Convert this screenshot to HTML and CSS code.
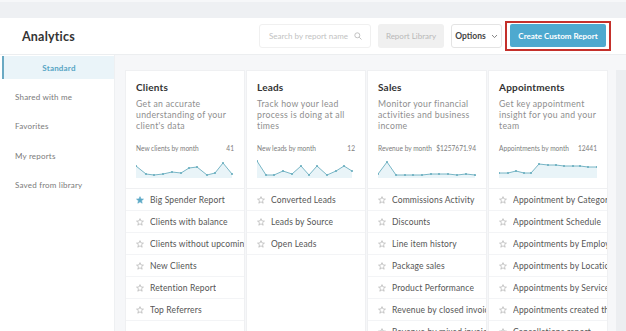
FILE: index.html
```html
<!DOCTYPE html>
<html lang="en">
<head>
  <meta charset="UTF-8">
  <title>Analytics</title>
  <link rel="stylesheet" href="styles.css">
</head>
<body>
  <div class="topstrip"></div>

  <!-- Header -->
  <div class="header">
    <h1>Analytics</h1>
    <div class="actions">
      <div class="search">
        <span>Search by report name</span>
        <svg width="8" height="8" viewBox="0 0 8 8"><circle cx="3.3" cy="3.3" r="2.5" fill="none" stroke="#bbb" stroke-width="0.9"/><line x1="5.2" y1="5.2" x2="7.5" y2="7.5" stroke="#bbb" stroke-width="0.9"/></svg>
      </div>
      <div class="btn-library">Report Library</div>
      <div class="btn-options">Options
        <svg width="7" height="5" viewBox="0 0 7 5"><polyline points="1,1 3.5,3.6 6,1" fill="none" stroke="#777" stroke-width="0.9"/></svg>
      </div>
      <div class="highlight"><div class="btn-create">Create Custom Report</div></div>
    </div>
  </div>

  <div class="body">
    <!-- Sidebar -->
    <div class="sidebar">
      <div class="side-item active">Standard</div>
      <div class="side-item">Shared with me</div>
      <div class="side-item">Favorites</div>
      <div class="side-item">My reports</div>
      <div class="side-item">Saved from library</div>
    </div>

    <!-- Report columns -->
    <div class="main">
      <div class="columns" id="columns"></div>
      <div class="track"></div>
    </div>
  </div>

  <script>
    const columns = [
      {
        title: 'Clients',
        desc: "Get an accurate understanding of your client's data",
        stat: 'New clients by month', value: '41',
        pts: [[0,8],[10,16],[18,17],[27,16],[36,14],[45,15],[53,10],[61,9],[71,17],[79,15],[87,5],[96,16]],
        items: ['Big Spender Report', 'Clients with balance', 'Clients without upcoming appointments', 'New Clients', 'Retention Report', 'Top Referrers'],
        fav: 0
      },
      {
        title: 'Leads',
        desc: 'Track how your lead process is doing at all times',
        stat: 'New leads by month', value: '12',
        pts: [[0,3],[9,17],[17,17],[26,13],[35,16],[44,8],[52,17],[60,8],[70,17],[79,13],[87,8],[95,13]],
        items: ['Converted Leads', 'Leads by Source', 'Open Leads']
      },
      {
        title: 'Sales',
        desc: 'Monitor your financial activities and business income',
        stat: 'Revenue by month', value: '$1257671.94',
        pts: [[0,16],[9,4],[18,17],[27,17],[35,17],[44,17],[53,16],[61,16],[70,16],[79,17],[88,16],[97,17]],
        items: ['Commissions Activity', 'Discounts', 'Line item history', 'Package sales', 'Product Performance', 'Revenue by closed invoices', 'Revenue by mixed invoices']
      },
      {
        title: 'Appointments',
        desc: 'Get key appointment insight for you and your team',
        stat: 'Appointments by month', value: '12441',
        pts: [[0,15],[9,15],[17,13],[25,15],[32,15],[40,6],[49,7],[57,7],[65,8],[74,8],[81,8],[89,9],[98,9]],
        items: ['Appointment by Category', 'Appointment Schedule', 'Appointments by Employee', 'Appointments by Location', 'Appointments by Service', 'Appointments created this week', 'Cancellations report']
      }
    ];

    const starOutline = '<svg class="star" width="8" height="8" viewBox="0 0 10 10"><polygon points="5,0.8 6.2,3.7 9.3,3.9 6.9,5.9 7.7,9 5,7.3 2.3,9 3.1,5.9 0.7,3.9 3.8,3.7" fill="none" stroke="#aaa" stroke-width="0.8" stroke-linejoin="round"/></svg>';
    const starFilled = '<svg class="star" width="8" height="8" viewBox="0 0 10 10"><polygon points="5,0.8 6.2,3.7 9.3,3.9 6.9,5.9 7.7,9 5,7.3 2.3,9 3.1,5.9 0.7,3.9 3.8,3.7" fill="#5ba8c6" stroke="#5ba8c6" stroke-width="0.8" stroke-linejoin="round"/></svg>';

    function sparkline(pts) {
      const line = pts.map(p => p.join(',')).join(' ');
      const area = '0,20 ' + line + ' ' + pts[pts.length - 1][0] + ',20';
      const dots = pts.map(p => `<circle cx="${p[0]}" cy="${p[1]}" r="1.1" fill="#6aaebf"/>`).join('');
      return `<svg class="spark" width="98" height="20" viewBox="0 0 98 20">
        <polygon points="${area}" fill="#e9f4f8"/>
        <polyline points="${line}" fill="none" stroke="#6aaebf" stroke-width="0.9"/>${dots}</svg>`;
    }

    const wrap = document.getElementById('columns');
    columns.forEach(col => {
      const el = document.createElement('div');
      el.className = 'column';
      const items = col.items.map((name, i) =>
        `<div class="item">${i === col.fav ? starFilled : starOutline}<span>${name}</span></div>`).join('');
      el.innerHTML = `
        <div class="card-top">
          <h2>${col.title}</h2>
          <p class="desc">${col.desc}</p>
          <div class="stat"><span>${col.stat}</span><span>${col.value}</span></div>
          ${sparkline(col.pts)}
        </div>
        <div class="items">${items}</div>
      `;
      wrap.appendChild(el);
    });
  </script>
</body>
</html>
```

FILE: styles.css
```css
* {
  box-sizing: border-box;
}
body {
  margin: 0;
  font-family: Lato, "Open Sans", sans-serif;
  color: #333;
  background: #fff;
  height: 331px;
  overflow: hidden;
}
.topstrip {
  height: 18px;
  background: #eef0f3;
  border-top: 2px solid #f6f7f9;
}
.header {
  height: 37px;
  display: flex;
  align-items: center;
  padding: 0 15px 0 22px;
  border-bottom: 1px solid #eceef0;
}
.header h1 {
  margin: 0;
  font-size: 12.5px;
  font-weight: bold;
  color: #333;
  letter-spacing: 0.2px;
}
.actions {
  margin-left: auto;
  display: flex;
  align-items: center;
}
.search {
  width: 112px;
  height: 24px;
  border: 1px solid #f0f0f0;
  border-radius: 3px;
  display: flex;
  align-items: center;
  justify-content: space-between;
  padding: 0 8px 0 9px;
  font-size: 8px;
  color: #c2c2c2;
  margin-right: 7px;
}
.btn-library {
  width: 66px;
  height: 24px;
  background: #f0f0f0;
  border-radius: 3px;
  font-size: 8px;
  color: #b8b8b8;
  display: flex;
  align-items: center;
  justify-content: center;
  margin-right: 7px;
}
.btn-options {
  width: 51px;
  height: 24px;
  border: 1px solid #e4e4e4;
  border-radius: 3px;
  font-size: 8.5px;
  font-weight: bold;
  color: #444;
  display: flex;
  align-items: center;
  justify-content: center;
  gap: 5px;
  margin-right: 3px;
}
.highlight {
  border: 2px solid #c4302b;
  padding: 1px 3px 2px;
}
.btn-create {
  width: 96px;
  height: 23px;
  background: #4ea9cf;
  border-radius: 2px;
  color: #fff;
  font-size: 8px;
  font-weight: bold;
  display: flex;
  align-items: center;
  justify-content: center;
}
.body {
  display: flex;
  height: 276px;
}
.sidebar {
  width: 115px;
  flex-shrink: 0;
  padding-top: 1px;
  border-right: 1px solid #eef0f2;
}
.side-item {
  height: 29.5px;
  display: flex;
  align-items: center;
  padding-left: 15px;
  font-size: 8px;
  color: #7a7a7a;
  letter-spacing: 0.2px;
}
.side-item.active {
  height: 23px;
  margin-left: 2px;
  margin-bottom: 3px;
  justify-content: center;
  padding-left: 0;
  background: #eaf4f9;
  border-left: 2px solid #6aa9c3;
  color: #56a4c4;
  font-weight: bold;
}
.main {
  flex: 1;
  display: flex;
  background: #f6f7f9;
  padding: 15px 0 0 10px;
}
.columns {
  display: flex;
  gap: 1px;
}
.column {
  width: 120px;
  background: #fff;
  border: 1px solid #eff0f2;
  border-bottom: none;
}
.card-top {
  padding: 9px 10px 10px;
  border-bottom: 1px solid #eff0f2;
}
.card-top h2 {
  margin: 0;
  font-size: 10px;
  line-height: 14px;
  font-weight: bold;
  color: #333;
  letter-spacing: 0.2px;
}
.desc {
  margin: 4px 0 0;
  height: 33px;
  font-size: 8.7px;
  line-height: 11px;
  color: #8e8e8e;
  letter-spacing: 0.3px;
}
.stat {
  margin-top: 12px;
  display: flex;
  justify-content: space-between;
  font-size: 6.6px;
  line-height: 10px;
  color: #7d7d7d;
}
.spark {
  display: block;
  margin-top: 5px;
}
.item {
  height: 22px;
  display: flex;
  align-items: center;
  gap: 6px;
  padding-left: 10px;
  border-bottom: 1px solid #f3f4f6;
  font-size: 8.5px;
  color: #555;
  letter-spacing: 0.15px;
  white-space: nowrap;
  overflow: hidden;
}
.item span {
  min-width: 0;
  overflow: hidden;
}
.item .star {
  flex-shrink: 0;
}
.track {
  width: 10px;
  margin-left: auto;
  background: #eceef1;
}
```
